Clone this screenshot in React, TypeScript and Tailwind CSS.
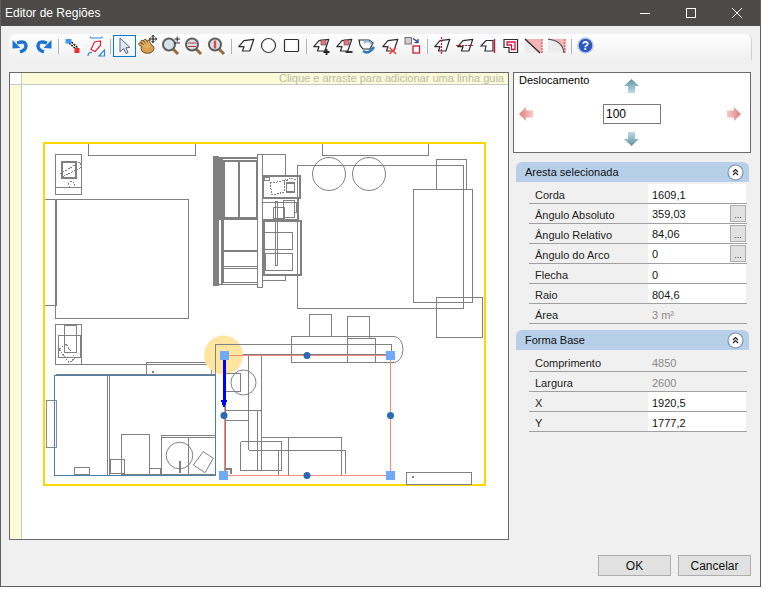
import type { ReactNode } from 'react';

const SHAPE = 'M4.8 12.7L10 6.7L19.8 5.3L15.8 17H8.5L10 12.7Z';

const edgeRows = [
  { label: 'Corda', value: '1609,1' },
  { label: 'Ângulo Absoluto', value: '359,03', more: true },
  { label: 'Ângulo Relativo', value: '84,06', more: true },
  { label: 'Ângulo do Arco', value: '0', more: true },
  { label: 'Flecha', value: '0' },
  { label: 'Raio', value: '804,6' },
  { label: 'Área', value: '3 m²', disabled: true },
];

const baseRows = [
  { label: 'Comprimento', value: '4850', disabled: true },
  { label: 'Largura', value: '2600', disabled: true },
  { label: 'X', value: '1920,5' },
  { label: 'Y', value: '1777,2' },
];

function Ico({ children, active }: { children: ReactNode; active?: boolean }) {
  return (
    <button className={`w-[23px] h-[22px] shrink-0 flex items-center justify-center ${active ? 'border border-[#0078d7]' : ''}`}>
      <svg width="23" height="24" viewBox="0 0 23 24" className="shrink-0">
        {children}
      </svg>
    </button>
  );
}

function Sep() {
  return (
    <div className="w-[6px] h-[22px] shrink-0 flex items-center justify-center">
      <div className="w-px h-[15px] bg-[#b4b4b4]" />
    </div>
  );
}

function Shape({ fill = 'white' }: { fill?: string }) {
  return <path d={SHAPE} fill={fill} stroke="#2b2b2b" strokeWidth="1.2" strokeLinejoin="round" />;
}

function Mag({ children }: { children?: ReactNode }) {
  return (
    <>
      <line x1="14" y1="15" x2="19" y2="20" stroke="#9a6a35" strokeWidth="3" />
      <circle cx="10" cy="10.5" r="6" fill="#d7e2e6" stroke="#5a5f62" strokeWidth="2" />
      {children}
    </>
  );
}

function Toolbar() {
  return (
    <div className="mx-[8px] mt-[8px] h-[26px] pt-[1px] flex items-start rounded-t-md border-r border-[#d0d0d0] bg-gradient-to-b from-white to-[#f0f0f0]">
      <Ico>
        <path d="M8 9 Q17 6 17 12 Q17 16 11 18" fill="none" stroke="#1b74d0" strokeWidth="3.4" />
        <path d="M3.5 6 L3.5 14.5 L11.5 14 Z" fill="#1b74d0" />
      </Ico>
      <Ico>
        <path d="M15 9 Q6 6 6 12 Q6 16 12 18" fill="none" stroke="#1b74d0" strokeWidth="3.4" />
        <path d="M19.5 6 L19.5 14.5 L11.5 14 Z" fill="#1b74d0" />
      </Ico>
      <Sep />
      <Ico>
        <path d="M8 9 L16 16 M10.5 8 L17 14" stroke="#111" strokeWidth="1.5" strokeDasharray="2 1" />
        <rect x="4.5" y="5" width="6" height="4.5" fill="#3f9bf0" />
        <rect x="13.5" y="14" width="5" height="5" fill="#e83030" />
      </Ico>
      <Ico>
        <path d="M6.5 4 H18 M6.5 2.5 V4 M18 2.5 V4" stroke="#2b86d8" strokeWidth="1.2" fill="none" />
        <path d="M7 15.5 L10.5 8 L16.5 7 L16.5 11.5 L11 17.5 Z" fill="white" stroke="#e02030" strokeWidth="1.2" />
        <path d="M4 22 Q4 18 8 18.5" stroke="#2b86d8" strokeWidth="1.2" fill="none" />
        <path d="M15 22 H20.5 V16 Z" fill="white" stroke="#2b86d8" strokeWidth="1.2" />
      </Ico>
      <Sep />
      <Ico active>
        <path d="M7 4 L7 18 L10.5 14.5 L13 19.5 L15 18.5 L12.8 13.8 L17 13.5 Z" fill="#e3e9f2" stroke="#4d6a8f" strokeWidth="1" />
      </Ico>
      <Ico>
        <path d="M11 14 L4 10 M12 13 L6 7.5 M13 12 L9 6.5 M14 12 L12.5 7.5" stroke="#5e4119" strokeWidth="3.2" strokeLinecap="round" />
        <ellipse cx="11.5" cy="14.5" rx="6.5" ry="4.8" fill="#d9a14d" stroke="#5e4119" strokeWidth="0.9" />
        <path d="M11 14 L4 10 M12 13 L6 7.5 M13 12 L9 6.5 M14 12 L12.5 7.5" stroke="#e2b062" strokeWidth="1.8" strokeLinecap="round" />
        <path d="M17 1.5 V8.5 M13.5 5 H20.5" stroke="#222" strokeWidth="1.2" />
        <path d="M15.5 3 L17 1 L18.5 3 M15.5 7 L17 9 L18.5 7 M15 3.5 L13 5 L15 6.5 M19 3.5 L21 5 L19 6.5" fill="none" stroke="#222" strokeWidth="0.8" />
      </Ico>
      <Ico>
        <Mag />
        <path d="M15.5 5 H21 M18.2 2.5 V7.5 M15.5 9 H21" stroke="#222" strokeWidth="1" />
      </Ico>
      <Ico>
        <Mag />
        <path d="M6 9 H14 M6 12.5 H14" stroke="#d03030" strokeWidth="1.2" />
      </Ico>
      <Ico>
        <Mag />
        <path d="M10 6.5 V14.5" stroke="#e04545" strokeWidth="2.4" />
      </Ico>
      <Sep />
      <Ico>
        <Shape />
      </Ico>
      <Ico>
        <circle cx="11.5" cy="11.5" r="7" fill="white" stroke="#3a3a3a" strokeWidth="1.2" />
      </Ico>
      <Ico>
        <rect x="4.5" y="5.5" width="14" height="12" rx="1" fill="white" stroke="#2b2b2b" strokeWidth="1.2" />
      </Ico>
      <Sep />
      <Ico>
        <Shape />
        <rect x="12" y="6" width="5" height="5" fill="#ee7777" stroke="#555" strokeWidth="0.7" />
        <path d="M17.5 15 V21 M14.5 18 H20.5" stroke="#222" strokeWidth="1.8" />
      </Ico>
      <Ico>
        <Shape />
        <rect x="12" y="6" width="5" height="5" fill="#ee7777" stroke="#555" strokeWidth="0.7" />
        <path d="M13.5 18 H20.5" stroke="#222" strokeWidth="1.8" />
      </Ico>
      <Ico>
        <path d="M4 6 H14 L18 9 L15 15 H8 L5 11 Z" fill="white" stroke="#2b2b2b" strokeWidth="1.2" />
        <path d="M9 9 Q13 5 17 10" fill="none" stroke="#8fb6d8" strokeWidth="2.2" />
        <path d="M8 17 Q14 21 19 13" fill="none" stroke="#2c7cc0" strokeWidth="2.6" />
      </Ico>
      <Ico>
        <Shape />
        <path d="M11.5 13.5 L18 20 M18 13.5 L11.5 20" stroke="#ee4444" strokeWidth="1.6" />
      </Ico>
      <Ico>
        <rect x="4" y="3.5" width="6.5" height="6.5" fill="#d6ccd0" stroke="#555" strokeWidth="0.8" />
        <path d="M12 4.5 L17 8 M17 5 V8.5 H13.5" fill="none" stroke="#1a3a90" strokeWidth="1.2" />
        <rect x="12" y="12" width="6.5" height="7" fill="white" stroke="#d01830" strokeWidth="1.3" />
      </Ico>
      <Sep />
      <Ico>
        <Shape />
        <path d="M11.5 3 V20" stroke="#e01030" strokeWidth="1.2" strokeDasharray="2 1" />
      </Ico>
      <Ico>
        <Shape />
        <path d="M3 11.5 H20" stroke="#e01030" strokeWidth="1.2" strokeDasharray="2 1" />
      </Ico>
      <Ico>
        <path d="M5 12 L10 6.5 H17 V17 H9 L10 12 Z" fill="white" stroke="#2b2b2b" strokeWidth="1.2" />
        <path d="M18.5 5 V19" stroke="#e01040" strokeWidth="1.4" />
      </Ico>
      <Ico>
        <path d="M5 5.5 H18.5 V18.5 H10 V13.5 H5 Z" fill="white" stroke="#2b2b2b" strokeWidth="1.2" />
        <path d="M8 8 H16 V15.5 H12.5 V11 H8 Z" fill="white" stroke="#e01040" strokeWidth="1.3" />
      </Ico>
      <Ico>
        <path d="M3 5 H20 V19 H18 Z" fill="#f3b4b4" />
        <path d="M3 5 L3 19 H18 Z" fill="#ececec" />
        <path d="M3 5 L18 19" stroke="#222" strokeWidth="1.2" />
        <path d="M20 5 V19" stroke="#e03040" strokeWidth="1" strokeDasharray="2 1" />
      </Ico>
      <Ico>
        <path d="M3 5 H20 V19 Q18 7 3 5 Z" fill="#f3b4b4" />
        <path d="M3 5 Q18 7 18 19 H3 Z" fill="#ececec" />
        <path d="M3 5 Q18 7 19 19" fill="none" stroke="#444" strokeWidth="1.2" />
        <path d="M20 5 V19" stroke="#e03040" strokeWidth="1" strokeDasharray="2 1" />
      </Ico>
      <Sep />
      <Ico>
        <circle cx="11.5" cy="11.5" r="7.5" fill="#2a58c0" stroke="#b8c8e8" strokeWidth="1.4" />
        <text x="11.5" y="15.5" textAnchor="middle" fontSize="12" fontWeight="700" fill="white" fontFamily="Liberation Sans, sans-serif">?</text>
      </Ico>
    </div>
  );
}

function FloorPlan() {
  return (
    <svg width="487" height="455" viewBox="22 85 487 455" className="block" shapeRendering="crispEdges">
      <g fill="none" stroke="#808080" strokeWidth="1">
        {/* quarto */}
        <rect x="88.5" y="143.5" width="107" height="12" />
        <rect x="55.5" y="154.5" width="26" height="40" />
        <path d="M55.5 187.5 H81.5" />
        <rect x="61.5" y="161.5" width="14" height="16" strokeWidth="2" />
        <path d="M60 174 L80 162 L82 167 L62 177 Z" strokeDasharray="2 1" />
        <circle cx="71.5" cy="184.5" r="3" strokeDasharray="2 1" />
        <rect x="55.5" y="199.5" width="133" height="119" />
        <path d="M44.5 199.5 H56 M44.5 305.5 H56" />
        <path d="M56 199.5 V305.5" strokeWidth="2" />

        {/* armario */}
        <rect x="213" y="156" width="5" height="129" fill="#808080" />
        <rect x="218.5" y="157.5" width="39" height="127" />
        <path d="M221.5 157.5 V284.5 M220 157 V218" strokeWidth="2" />
        <rect x="223.5" y="160.5" width="33" height="57" strokeWidth="2" />
        <path d="M239 160 V217" strokeWidth="2" />
        <path d="M218 158 H257" strokeWidth="2" />
        <path d="M218 219 H257 M223 250.5 H257" strokeWidth="2" />
        <path d="M223.5 220 V282 M223 266.5 H257 M223 268.5 H257 M223 282.5 H257" />
        <rect x="257.5" y="154.5" width="5" height="133" />

        {/* cozinha */}
        <path d="M262.5 154.5 H285.5 V175 M285.5 274 V280.5 H262.5" />
        <rect x="262.5" y="175.5" width="37" height="22" strokeWidth="2" />
        <path d="M262 202.5 H297 M262 219.5 H297" />
        <path d="M298 197 V220" />
        <rect x="263.5" y="220.5" width="37" height="54" strokeWidth="2" />
        <rect x="264.5" y="232.5" width="28" height="17" />
        <rect x="265.5" y="253.5" width="27" height="17" strokeWidth="1.5" />
        <rect x="275.5" y="201.5" width="2" height="64" />
        <rect x="273.5" y="207.5" width="11" height="11" />
        <rect x="283.5" y="200.5" width="11" height="17" />
        <path d="M294 202 H296 V212 H294" />
        <path d="M270 183 L277 182 L285 180 L284 192 L277 194 L272 195 Z" strokeDasharray="2 1" />
        <rect x="286.5" y="183" width="8" height="9" strokeWidth="1.5" />
        <path d="M284 183 L290 178 L296 180" strokeDasharray="2 1" />
        <rect x="264.5" y="177" width="5" height="3" />

        {/* sala */}
        <rect x="297.5" y="165.5" width="166" height="143" />
        <circle cx="329" cy="174" r="16.5" shapeRendering="auto" />
        <circle cx="369" cy="174" r="16.5" shapeRendering="auto" />
        <rect x="322.5" y="143.5" width="106" height="12" />
        <rect x="436.5" y="159.5" width="30" height="30" />
        <rect x="413.5" y="189.5" width="59" height="113" />
        <rect x="436.5" y="297.5" width="46" height="40" />
        <rect x="309.5" y="314.5" width="22" height="22" />
        <rect x="347.5" y="316.5" width="22" height="22" />
        <rect x="347.5" y="338.5" width="28" height="24" />
        <path d="M394 336.5 H291.5 V362.5 H394" />
        <path d="M394 336.5 A9 13 0 0 1 394 362.5" shapeRendering="auto" />
        <path d="M215.5 375 V344.5 H391.5 V355" />
        <path d="M225 354.5 H391" />

        {/* mesa de cabeceira e corredor */}
        <rect x="55.5" y="324.5" width="26" height="40" />
        <rect x="64.5" y="325.5" width="12" height="27" />
        <rect x="58.5" y="335.5" width="22" height="22" />
        <path d="M59 349 L66 344 L75 358 L69 363 Z" strokeDasharray="2 1" />
        <path d="M81.5 364.5 H215 M55.5 374.5 H215" />
        <rect x="146.5" y="362.5" width="65" height="12" />
        <rect x="152" y="371" width="1" height="1" fill="#808080" />

        {/* quarto inferior */}
        <path d="M107.5 375 V475 M109.5 375 V475" />
        <rect x="46.5" y="400.5" width="10" height="47" stroke="#7f8c99" />
        <rect x="74.5" y="467.5" width="15" height="7" />
        <rect x="121.5" y="434.5" width="28" height="40" />
        <rect x="110.5" y="459.5" width="14" height="14" />
        <rect x="149.5" y="468.5" width="11" height="6" />
        <path d="M161.5 474.5 V435.5 H215 M161.5 437.5 H215 M188.5 437.5 V474.5 M161 474.5 H215" />
        <circle cx="179.5" cy="455.5" r="13.3" shapeRendering="auto" />
        <path d="M180 461 V473" strokeWidth="2" />
        <path d="M203.3 451.7 L213.3 458.3 L205 472.7 L193.3 465 Z" shapeRendering="auto" />
      </g>

      <rect x="54.5" y="375.5" width="161" height="100" fill="none" stroke="#4a80b0" strokeWidth="1" />
      <rect x="44" y="143" width="441" height="342" fill="none" stroke="#ffd700" strokeWidth="2" />

      {/* aresta selecionada */}
      <circle cx="223.5" cy="355" r="19.5" fill="#ffe6a0" shapeRendering="auto" />

      <g fill="none" stroke="#808080" strokeWidth="1">
        {/* banheiro */}
        <path d="M215.5 375 V344.5 H240 M225.5 355 V475 M225.5 373.5 H240 V391.5 H225.5" />
        <circle cx="243.5" cy="382.5" r="12.5" shapeRendering="auto" />
        <path d="M248.5 355 V450 M261.5 355 V437 M225.5 410.5 H261.5 M225.5 420.5 H248.5" />
        <path d="M226 468.5 H230.5 V474" strokeWidth="2" />
        <rect x="257.5" y="410.5" width="4" height="60" />
        <path d="M240.5 441.5 V470.5 H281.5 V441.5 H240.5 M248.5 450.5 H345.5 V474 M261.5 437.5 H341.5 V474.5 M288.5 437.5 V474.5 M278.5 450.5 V475" />
        <rect x="406.5" y="472.5" width="65" height="12" />
        <rect x="412" y="476" width="1" height="1" fill="#808080" />
      </g>

      <path d="M224 355.5 H390.5 V475.5 H224 Z" fill="none" stroke="#f58878" strokeWidth="1" />
      <path d="M224 356 V404" stroke="#0000ff" strokeWidth="3" />
      <path d="M220.5 400 H227.5 L224 408 Z" fill="#0000ff" />
      <circle cx="224" cy="415.5" r="3.5" fill="#2a68b8" shapeRendering="auto" />
      <circle cx="307" cy="355.5" r="3.5" fill="#2a68b8" shapeRendering="auto" />
      <circle cx="390.5" cy="415.5" r="3.5" fill="#2a68b8" shapeRendering="auto" />
      <circle cx="307" cy="475.5" r="3.5" fill="#2a68b8" shapeRendering="auto" />
      <rect x="220" y="351" width="9" height="9" fill="#6eaaf8" />
      <rect x="219" y="471" width="9" height="9" fill="#6eaaf8" />
      <rect x="386" y="351" width="9" height="9" fill="#6eaaf8" />
      <rect x="386" y="471" width="9" height="9" fill="#6eaaf8" />
    </svg>
  );
}

function Canvas() {
  return (
    <div className="w-[500px] h-[468px] border border-[#696969] bg-white grid grid-cols-[12px_1fr] grid-rows-[12px_1fr] overflow-hidden">
      <div className="bg-white border-r border-b border-[#c8c8c8]" />
      <div className="bg-[#fbfbd8] border-b border-[#c8c8c8] flex items-center justify-end pr-[5px] text-[11px] leading-none text-[#b9b9a8]">
        Clique e arraste para adicionar uma linha guia
      </div>
      <div className="bg-[#fbfbd8] border-r border-[#c8c8c8]" />
      <FloorPlan />
    </div>
  );
}

function MoveArrow({ dir }: { dir: 'up' | 'down' | 'left' | 'right' }) {
  const vertical = dir === 'up' || dir === 'down';
  const pts = {
    up: '7.5,0 15,7 11,7 11,14 4,14 4,7 0,7',
    down: '4,0 11,0 11,7 15,7 7.5,14 0,7 4,7',
    left: '0,7 7,0 7,3.5 14,3.5 14,10.5 7,10.5 7,14',
    right: '14,7 7,0 7,3.5 0,3.5 0,10.5 7,10.5 7,14',
  }[dir];
  const id = `grad-${dir}`;
  const dark = vertical ? '#5f93a5' : '#dc8080';
  const light = vertical ? '#bcdbe6' : '#f8c8c8';
  const [a, b] = dir === 'down' || dir === 'right' ? [light, dark] : [dark, light];
  return (
    <svg width="15" height="14" viewBox="0 0 15 14" className="shrink-0">
      <defs>
        <linearGradient id={id} x1="0" y1="0" x2={vertical ? '0' : '1'} y2={vertical ? '1' : '0'}>
          <stop offset="0" stopColor={a} />
          <stop offset="1" stopColor={b} />
        </linearGradient>
      </defs>
      <polygon points={pts} fill={`url(#${id})`} />
    </svg>
  );
}

function MovePanel() {
  return (
    <div className="h-[81px] border border-[#696969] bg-white grid grid-cols-[89px_58px_1fr] grid-rows-[31px_20px_1fr]">
      <div className="pl-[5px] text-[11px] leading-[14px] text-black">Deslocamento</div>
      <div className="flex justify-center pt-[6px] pr-[2px]">
        <MoveArrow dir="up" />
      </div>
      <div />
      <div className="flex items-center pl-[5px]">
        <MoveArrow dir="left" />
      </div>
      <input
        defaultValue="100"
        className="w-[58px] h-[20px] border border-[#7a7a7a] px-[2px] text-[12px] text-black outline-none"
      />
      <div className="flex items-center justify-end pr-[8px]">
        <MoveArrow dir="right" />
      </div>
      <div />
      <div className="flex justify-center pt-[8px] pr-[2px]">
        <MoveArrow dir="down" />
      </div>
      <div />
    </div>
  );
}

function GroupHeader({ title }: { title: string }) {
  return (
    <div className="h-[20px] rounded-t-md bg-[#b8cfe9] flex items-center justify-between pl-[9px] pr-[5px] text-[11px] text-[#111]">
      <span>{title}</span>
      <svg width="17" height="17" viewBox="0 0 17 17" className="shrink-0">
        <circle cx="8.5" cy="8.5" r="7.5" fill="white" stroke="#7f93ab" strokeWidth="1.2" />
        <path d="M6 8 L8.5 5.5 L11 8 M6 11 L8.5 8.5 L11 11" fill="none" stroke="#222" strokeWidth="1.2" />
      </svg>
    </div>
  );
}

function PropRow({ label, value, more, disabled }: { label: string; value: string; more?: boolean; disabled?: boolean }) {
  return (
    <div className="h-[20px] ml-[13px] w-[218px] flex border-b border-[#a0a0a0] text-[11px] leading-[23px]">
      <div className="w-[119px] pl-[6px] text-[#222]">{label}</div>
      <div className={`w-[98px] pl-[4px] flex justify-between ${disabled ? 'text-[#8a8a8a]' : 'bg-white text-[#111]'}`}>
        <span className={more ? '-mt-[1px]' : ''}>{value}</span>
        {more && (
          <span className="w-[16px] h-[17px] mt-[1px] bg-[#e1e1e1] border border-[#adadad] flex items-end justify-center text-[9px] leading-[11px] text-[#333]">
            ...
          </span>
        )}
      </div>
    </div>
  );
}

function Side() {
  return (
    <div className="w-[238px] ml-[4px]">
      <MovePanel />
      <div className="ml-[3px] w-[233px] mt-[9px]">
        <GroupHeader title="Aresta selecionada" />
        <div className="pt-[2px]">
          {edgeRows.map((r) => (
            <PropRow key={r.label} {...r} />
          ))}
        </div>
        <div className="mt-[6px]">
          <GroupHeader title="Forma Base" />
        </div>
        <div className="pt-[2px]">
          {baseRows.map((r) => (
            <PropRow key={r.label} {...r} />
          ))}
        </div>
      </div>
    </div>
  );
}

export default function App() {
  return (
    <div className="w-[766px] h-[597px] bg-white font-['Liberation_Sans',sans-serif]">
      <div className="w-[761px] h-[587px] flex flex-col bg-[#f0f0f0] border-x border-b border-[#5f5f5f]">
        <div className="h-[26px] shrink-0 bg-[#4b4a48] flex items-center justify-between text-[12px] text-white">
          <span className="pl-[4px]">Editor de Regiões</span>
          <div className="flex">
            <div className="w-[46px] h-[26px] flex items-center justify-center">
              <svg width="10" height="10" viewBox="0 0 10 10"><path d="M0 5.5 H10" stroke="white" /></svg>
            </div>
            <div className="w-[46px] h-[26px] flex items-center justify-center">
              <svg width="10" height="10" viewBox="0 0 10 10"><rect x="0.5" y="0.5" width="9" height="9" fill="none" stroke="white" /></svg>
            </div>
            <div className="w-[46px] h-[26px] flex items-center justify-center">
              <svg width="10" height="10" viewBox="0 0 10 10"><path d="M0 0 L10 10 M10 0 L0 10" stroke="white" /></svg>
            </div>
          </div>
        </div>
        <Toolbar />
        <div className="flex ml-[8px] mt-[12px]">
          <Canvas />
          <Side />
        </div>
        <div className="flex justify-end gap-[7px] mr-[9px] mt-[15px] text-[12px] text-[#111]">
          <button className="w-[73px] h-[21px] bg-[#e1e1e1] border border-[#adadad]">OK</button>
          <button className="w-[73px] h-[21px] bg-[#e1e1e1] border border-[#adadad]">Cancelar</button>
        </div>
      </div>
    </div>
  );
}
